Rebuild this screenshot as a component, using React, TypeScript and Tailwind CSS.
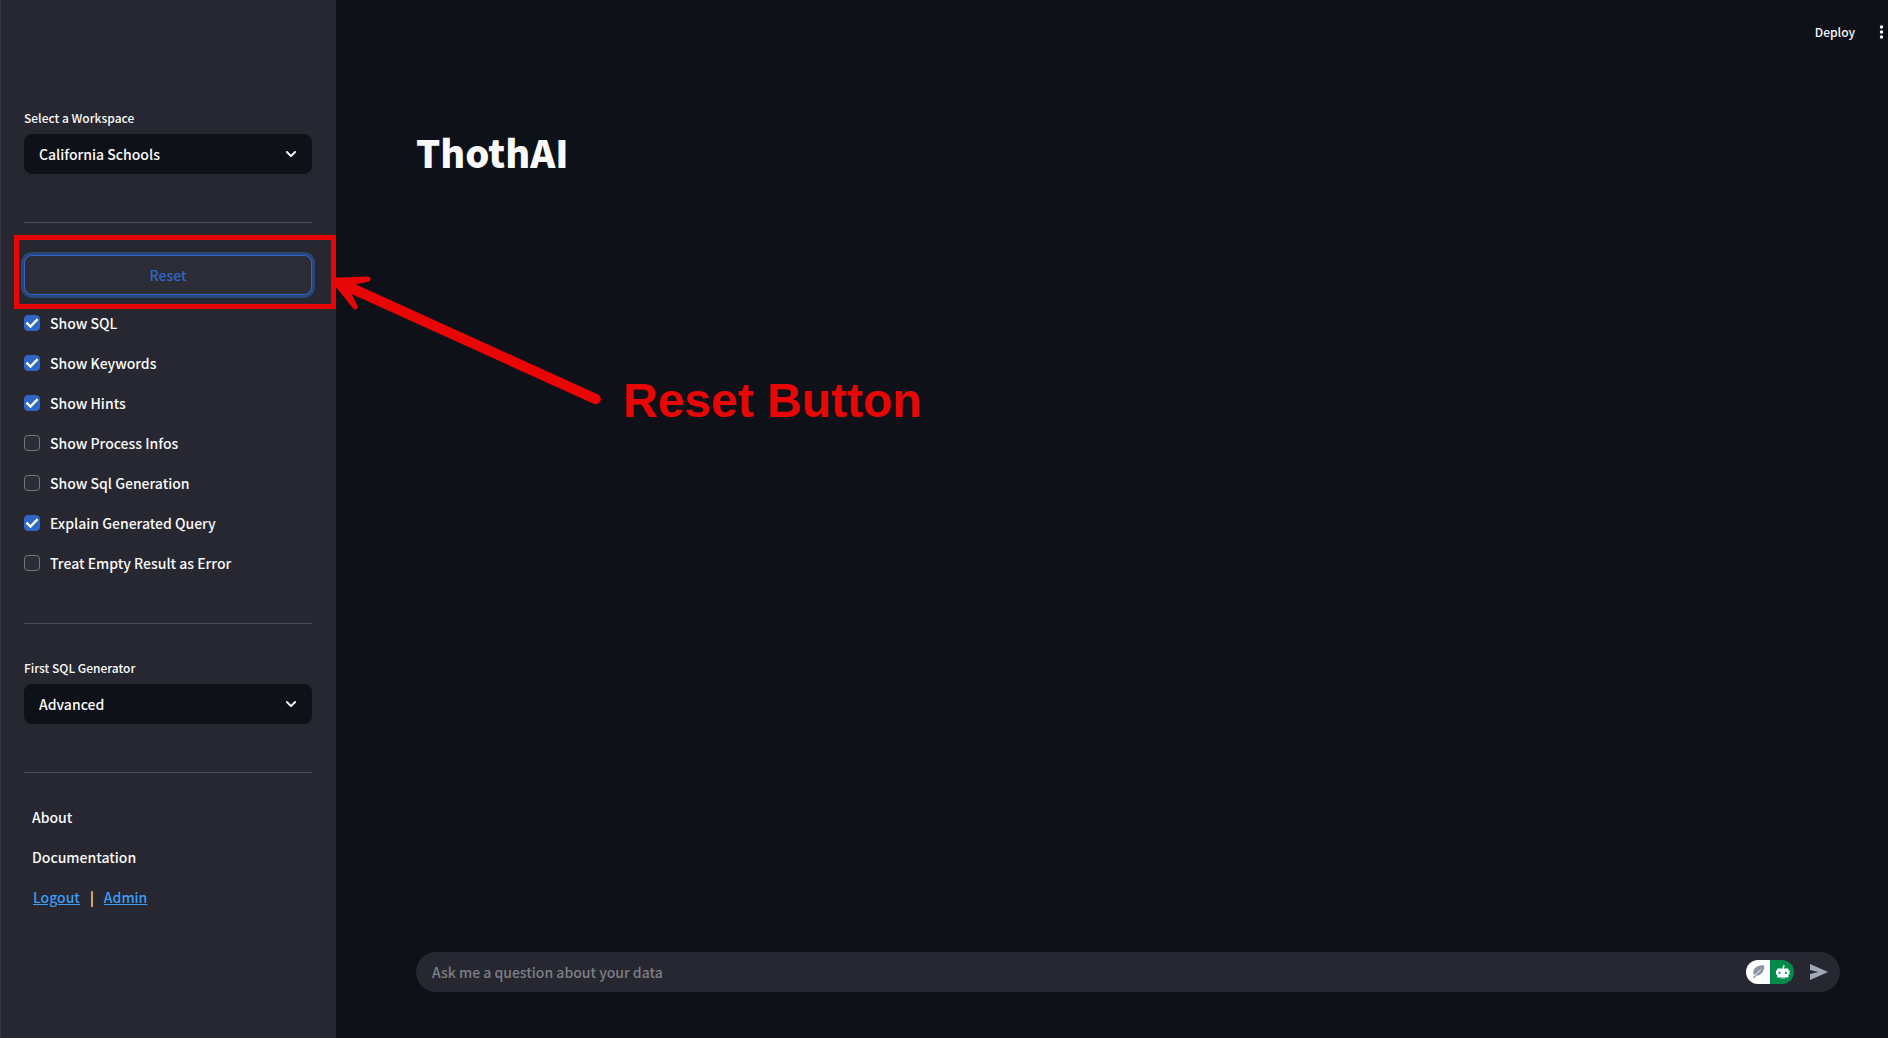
import React, { useState } from "react";

const OPTIONS = [
  { id: "sql", label: "Show SQL", on: true },
  { id: "keywords", label: "Show Keywords", on: true },
  { id: "hints", label: "Show Hints", on: true },
  { id: "process", label: "Show Process Infos", on: false },
  { id: "generation", label: "Show Sql Generation", on: false },
  { id: "explain", label: "Explain Generated Query", on: true },
  { id: "empty", label: "Treat Empty Result as Error", on: false },
];

function SelectField({ id, label, options }: { id: string; label: string; options: string[] }) {
  return (
    <div className="flex flex-col gap-1">
      <label htmlFor={id} className="text-xs leading-6 font-medium">
        {label}
      </label>
      <div className="relative">
        <select
          id={id}
          className="h-10 w-full appearance-none rounded-lg bg-[#0e1117] px-[15px] text-sm font-medium text-[#fafafa]"
        >
          {options.map((o) => (
            <option key={o}>{o}</option>
          ))}
        </select>
        <svg
          className="pointer-events-none absolute top-3 right-[13px] size-4"
          viewBox="0 0 16 16"
          fill="none"
          stroke="#fafafa"
          strokeWidth="2"
          strokeLinecap="round"
          strokeLinejoin="round"
        >
          <path d="M3.9 6 L8 10.1 L12.1 6" />
        </svg>
      </div>
    </div>
  );
}

function CheckOption({ id, label, on }: { id: string; label: string; on: boolean }) {
  const [checked, setChecked] = useState(on);
  return (
    <div className="flex h-6 items-center gap-[10px]">
      <span className="relative flex size-4">
        <input
          id={id}
          type="checkbox"
          checked={checked}
          onChange={(e) => setChecked(e.target.checked)}
          className="size-4 appearance-none rounded border border-[#75767c] bg-[#2b2c36] checked:border-[#2f66c5] checked:bg-[#2f66c5]"
        />
        {checked && (
          <svg
            className="pointer-events-none absolute inset-0 size-4"
            viewBox="0 0 16 16"
            fill="none"
            stroke="#fff"
            strokeWidth="2.4"
          >
            <path d="M2.4 7.6 L6.5 11.6 L13.6 4.2" />
          </svg>
        )}
      </span>
      <label htmlFor={id} className="text-sm leading-6 font-medium">
        {label}
      </label>
    </div>
  );
}

function Divider() {
  return <hr className="border-[#4c4d56]" />;
}

export default function App() {
  return (
    <div className="relative flex min-h-screen bg-[#0e1117] font-['Noto_Sans_CJK_SC',sans-serif] text-[#fafafa]">
      <aside className="flex w-[336px] shrink-0 flex-col border-l border-[#393a43] bg-[#262730] pt-[106px] pr-6 pl-[23px]">
        <SelectField id="workspace" label="Select a Workspace" options={["California Schools"]} />
        <div className="pt-12 pb-8">
          <Divider />
        </div>
        <div className="relative">
          <button
            type="button"
            className="flex h-10 w-full justify-center rounded-lg border border-[#2f66c5] bg-[#2b2c36] pt-[7px] text-sm leading-6 font-medium text-[#2f66c5] ring-3 ring-[#2a4578]"
          >
            Reset
          </button>
          <div className="pointer-events-none absolute -top-5 -right-6 -bottom-[14px] -left-[10px] border-5 border-[#e90606]" />
          {/* Arrow and caption pointing at the reset button */}
          <div className="pointer-events-none absolute top-0 left-full flex pl-4">
            <svg className="h-[160px] w-[280px] shrink-0" viewBox="328 255 280 160" fill="#e90606">
              <path d="M333 277.8 L367.5 276.6 A2.6 2.6 0 0 1 368.2 281.8 L355.6 284.3 L597.6 394.2 A5.2 5.2 0 0 1 593.6 403.8 L351.6 294 L357.6 306.2 A2.6 2.6 0 0 1 353.4 308.8 L333.5 284 Z" />
            </svg>
            <p className="pt-[119px] pl-[15px] font-['Liberation_Sans',sans-serif] text-5xl leading-[54px] font-bold whitespace-nowrap text-[#e90606]">
              Reset Button
            </p>
          </div>
        </div>
        <div className="flex flex-col gap-4 pt-4">
          {OPTIONS.map((o) => (
            <CheckOption key={o.id} {...o} />
          ))}
        </div>
        <div className="pt-12 pb-8">
          <Divider />
        </div>
        <SelectField id="generator" label="First SQL Generator" options={["Advanced"]} />
        <div className="pt-12 pb-8">
          <Divider />
        </div>
        <nav className="flex flex-col items-start gap-4 pl-2 text-sm leading-6 font-medium">
          <a href="#about">About</a>
          <a href="#documentation">Documentation</a>
          <div className="flex gap-[10px] pl-px">
            <a href="#logout" className="text-[#3d9df3] underline">
              Logout
            </a>
            <span>|</span>
            <a href="#admin" className="text-[#3d9df3] underline">
              Admin
            </a>
          </div>
        </nav>
      </aside>
      <main className="flex min-w-0 grow flex-col">
        <header className="flex h-16 items-center justify-end gap-6">
          <button type="button" className="text-xs leading-6 font-medium">
            Deploy
          </button>
          <button type="button" aria-label="Menu" className="pr-1">
            <svg className="h-4 w-[5px]" viewBox="0 0 5 16" fill="#fafafa">
              <circle cx="2.5" cy="3" r="1.7" />
              <circle cx="2.5" cy="8" r="1.7" />
              <circle cx="2.5" cy="13" r="1.7" />
            </svg>
          </button>
        </header>
        <h1 className="px-20 pt-[62px] text-[38px] leading-[52px] font-black">ThothAI</h1>
        <form className="mt-auto mr-12 mb-[46px] ml-20 flex h-10 items-center rounded-full bg-[#262730]">
          <input
            aria-label="Question"
            placeholder="Ask me a question about your data"
            className="h-10 min-w-0 grow bg-transparent pb-px pl-4 text-sm font-medium outline-none placeholder:text-[#7e7f84]"
          />
          <svg className="mr-4 h-6 w-12 shrink-0" viewBox="0 0 48 24">
            <path d="M12 0 H24 V24 H12 A12 12 0 0 1 12 0 Z" fill="#fff" />
            <path d="M24 0 H36 A12 12 0 0 1 36 24 H24 Z" fill="#018a4a" />
            <path
              d="M18.2 5.6 C14 4.6 9 7 7.6 10.4 C6.6 13 8 14.6 9 14.8 L7 17.4 L8.4 18.2 L10.4 15.8 C15 16 19 11 18.2 5.6 Z"
              fill="#8b94a8"
            />
            <path d="M14.8 9.4 L8.6 16" stroke="#fff" strokeWidth="0.9" fill="none" />
            <path d="M38.2 5.4 L36.8 8.6" stroke="#fff" strokeWidth="1.4" />
            <path
              d="M31.2 8.4 H42.4 V10.4 H43.6 V14.6 H42.4 V17.4 H31.2 V14.6 H30 V10.4 H31.2 Z"
              fill="#fff"
            />
            <rect x="32.6" y="11.8" width="1.8" height="2" fill="#018a4a" />
            <rect x="39" y="11.8" width="1.8" height="2" fill="#018a4a" />
            <path d="M34.6 18.4 H39" stroke="#7cc4a2" strokeWidth="1" />
          </svg>
          <button type="submit" aria-label="Send" className="mr-3">
            <svg className="block h-4 w-[18px]" viewBox="0 0 18 16" fill="#a3a8b8">
              <path d="M0 0 L18 8 L0 16 V10 L8.5 8 L0 6 Z" />
            </svg>
          </button>
        </form>
      </main>
    </div>
  );
}
